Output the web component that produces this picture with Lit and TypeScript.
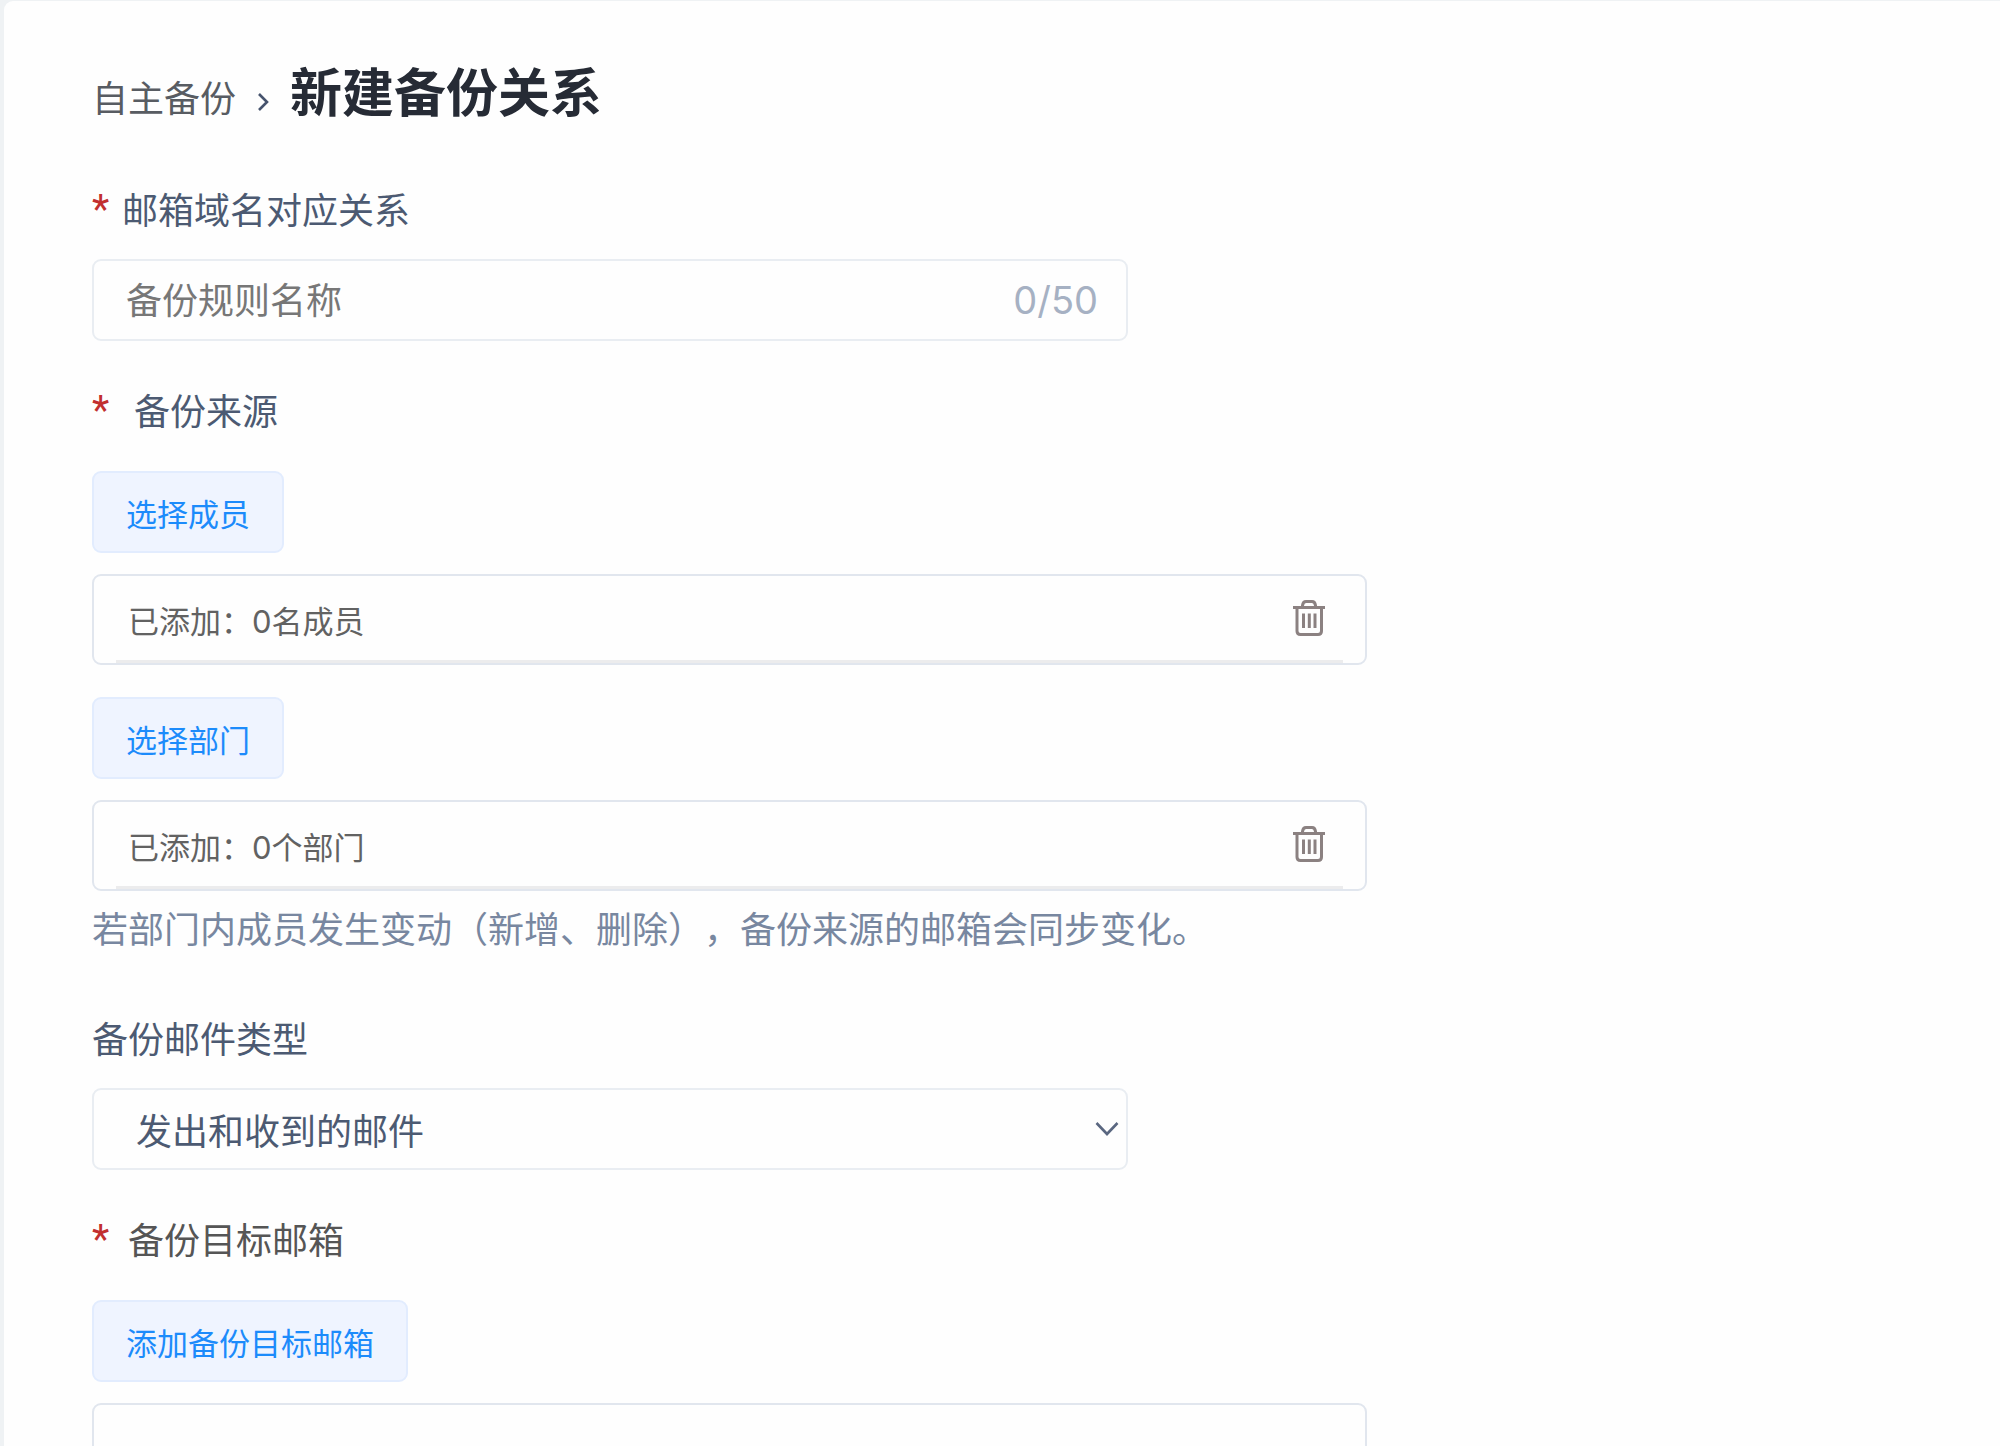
import { LitElement, html, css, svg } from "lit";
import { customElement, property, state } from "lit/decorators.js";

const trashIcon = svg`
  <svg class="icon" viewBox="0 0 34 38" width="34" height="38" fill="none" stroke="currentColor" stroke-width="3" aria-hidden="true">
    <path d="M1 8.500H33" />
    <path d="M10.500 8V6.500Q11 2.500 14 2.500H20Q23 2.500 23.500 6.500V8" />
    <path d="M5 8.500V32Q5 35.500 8.500 35.500H26Q29.500 35.500 29.500 32V8.500" />
    <path d="M11.500 14.500V29M17.300 14.500V29M23 14.500V29" stroke-width="3" />
  </svg>`;

@customElement("added-row")
export class AddedRow extends LitElement {
  @property() text = "";
  @property() action = "清空";

  static styles = css`
    :host {
      display: block;
    }
    .row {
      box-sizing: border-box;
      width: 100%;
      min-height: 91px;
      padding: 0 22px;
      border: 2px solid #e1e6ee;
      border-radius: 9px;
      display: flex;
    }
    .inner {
      flex: 1;
      display: flex;
      align-items: center;
      justify-content: space-between;
      padding: 0 17px 0 12px;
      border-bottom: 3px solid #ececed;
      color: #626262;
      font-family: Inter, "Noto Sans CJK SC", sans-serif;
      font-size: 31px;
      line-height: 44px;
    }
    .text {
      padding-top: 8px;
    }
    .clear {
      display: flex;
      margin: 0;
      padding: 0;
      border: 0;
      background: none;
      color: #8b8181;
      cursor: pointer;
    }
  `;

  render() {
    return html`<div class="row">
      <div class="inner">
        <span class="text">${this.text}</span>
        <button class="clear" type="button" aria-label=${this.action}>${trashIcon}</button>
      </div>
    </div>`;
  }
}

@customElement("app-root")
export class AppRoot extends LitElement {
  @state() private name = "";

  static styles = css`
    :host {
      display: block;
      font-family: "Noto Sans CJK SC", "Noto Sans", sans-serif;
      text-spacing-trim: space-all;
    }
    .page {
      box-sizing: border-box;
      height: 100vh;
      padding: 1px 0 0 4px;
      overflow: auto;
      scrollbar-width: none;
      background: #eff2f4;
    }
    .card {
      box-sizing: border-box;
      min-height: 100%;
      padding: 51px 88px 64px;
      border-radius: 9px 0 0 0;
      background: #fefefe;
    }
    .crumbs {
      display: flex;
      align-items: baseline;
      line-height: 76px;
    }
    .crumb {
      color: #585c62;
      font-size: 36px;
      text-decoration: none;
    }
    .sep {
      width: 12px;
      height: 20px;
      margin: 0 21px 2px;
    }
    .title {
      margin: 0;
      color: #262b35;
      font-size: 52px;
      font-weight: 700;
    }
    .wide {
      max-width: 1275px;
    }
    .narrow {
      max-width: 1036px;
    }
    .group {
      display: flex;
      flex-direction: column;
      margin: 44px 0 0;
    }
    .group.first {
      margin-top: 50px;
    }
    .group.spaced {
      margin-top: 62px;
    }
    .label {
      display: flex;
      gap: 12px;
      margin: 0;
      padding: 0;
      color: #4c5a72;
      font-size: 36px;
      font-weight: 400;
      line-height: 48px;
    }
    .label.loose {
      gap: 24px;
    }
    .label.target {
      gap: 18px;
      color: #555;
    }
    .star {
      width: 18px;
      height: 48px;
      color: #c22f2f;
      font-family: Roboto, sans-serif;
      font-size: 40px;
      line-height: 52px;
    }
    .field {
      box-sizing: border-box;
      width: 100%;
      height: 82px;
      margin-top: 27px;
      border: 2px solid #e9edf2;
      border-radius: 9px;
      display: flex;
      align-items: center;
    }
    .name {
      flex: 1;
      min-width: 0;
      height: 100%;
      padding: 0 0 4px 32px;
      box-sizing: border-box;
      border: 0;
      outline: 0;
      background: none;
      color: #4c5a72;
      font: inherit;
      font-size: 36px;
    }
    .name::placeholder {
      color: #777;
    }
    .count {
      padding: 0 28px;
      color: #a6b1c3;
      font-family: Inter, sans-serif;
      font-size: 38px;
    }
    .type {
      grid-area: 1 / 1;
      width: 100%;
      height: 100%;
      padding: 0 64px 0 42px;
      border: 0;
      outline: 0;
      appearance: none;
      background: none;
      color: #4c5a72;
      font: inherit;
      font-size: 36px;
    }
    .select {
      display: grid;
      grid-template-columns: 1fr;
      grid-template-rows: 100%;
    }
    .arrow {
      grid-area: 1 / 1;
      justify-self: end;
      margin-right: 7px;
      pointer-events: none;
    }
    .pick {
      align-self: flex-start;
      height: 82px;
      margin: 38px 0 21px;
      padding: 0 32px;
      border: 2px solid #e2ecfe;
      border-radius: 9px;
      background: #eff4ff;
      color: #1c8bfb;
      font: inherit;
      font-size: 31px;
      cursor: pointer;
    }
    .pick.next {
      margin-top: 32px;
    }
    .hint {
      margin: 12px 0 0;
      color: #7887a0;
      font-size: 36px;
      line-height: 48px;
    }
    .targets {
      box-sizing: border-box;
      min-height: 180px;
      border: 2px solid #e1e6ee;
      border-radius: 9px;
    }
  `;

  private onName(e: Event) {
    this.name = (e.target as HTMLInputElement).value;
  }

  render() {
    return html`
      <div class="page">
        <main class="card" lang="zh-CN">
          <nav class="crumbs">
            <a class="crumb" href="#backup">自主备份</a>
            <svg class="sep" viewBox="0 0 12 20" fill="none" stroke="#46536d" stroke-width="2.600" aria-hidden="true">
              <path d="M2 2L10 10L2 18" />
            </svg>
            <h1 class="title">新建备份关系</h1>
          </nav>

          <form class="wide">
            <div class="group first narrow">
              <label class="label" for="name"><span class="star">*</span>邮箱域名对应关系</label>
              <div class="field">
                <input class="name" id="name" type="text" maxlength="50" placeholder="备份规则名称" .value=${this.name} @input=${this.onName} />
                <span class="count">${this.name.length}/50</span>
              </div>
            </div>

            <section class="group">
              <h2 class="label loose"><span class="star">*</span>备份来源</h2>
              <button class="pick" type="button">选择成员</button>
              <added-row text="已添加：0名成员" action="清空成员"></added-row>
              <button class="pick next" type="button">选择部门</button>
              <added-row text="已添加：0个部门" action="清空部门"></added-row>
              <p class="hint">若部门内成员发生变动（新增、删除），备份来源的邮箱会同步变化。</p>
            </section>

            <div class="group spaced narrow">
              <label class="label" for="type">备份邮件类型</label>
              <div class="field select">
                <select class="type" id="type">
                  <option>发出和收到的邮件</option>
                </select>
                <svg class="arrow" viewBox="0 0 24 16" width="24" height="16" fill="none" stroke="#5a6780" stroke-width="2.600" aria-hidden="true">
                  <path d="M1.500 2L12 13L22.500 2" />
                </svg>
              </div>
            </div>

            <section class="group">
              <h2 class="label target"><span class="star">*</span>备份目标邮箱</h2>
              <button class="pick" type="button">添加备份目标邮箱</button>
              <div class="targets"></div>
            </section>
          </form>
        </main>
      </div>
    `;
  }
}
